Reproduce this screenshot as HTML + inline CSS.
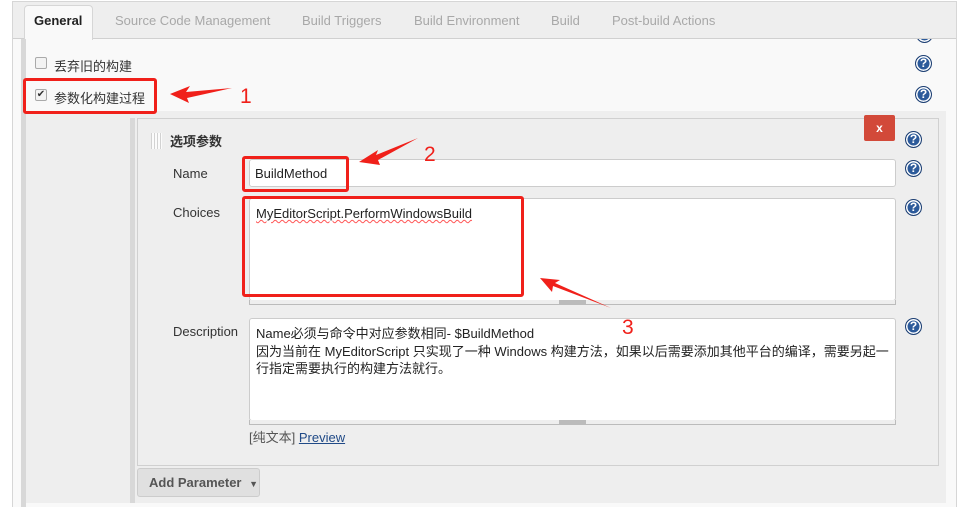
<!DOCTYPE html>
<html><head><meta charset="utf-8"><style>
*{margin:0;padding:0;box-sizing:border-box}
body{width:969px;height:507px;background:#fff;position:relative;overflow:hidden;font-family:"Liberation Sans","Noto Sans CJK SC",sans-serif;font-size:13px;color:#333}
.a{position:absolute}
.help{position:absolute;width:17px;height:17px;border-radius:50%;background:#2c5a9a;border:1px solid #1d3f73;box-shadow:inset 0 0 0 1.5px #fff;color:#fff;font:bold 12px "Liberation Sans",sans-serif;text-align:center;line-height:15px}
.lbl{position:absolute;font-size:13px;color:#333}
.inp{position:absolute;background:#fff;border:1px solid #ccc;border-radius:3px}
.bar{position:absolute;height:5px;background:#eee;border:1px solid #bbb;border-top:none}
.bar i{position:absolute;left:309px;top:0;width:27px;height:4px;background:#bbb}
.red{position:absolute;border:3px solid #f0201a;border-radius:3px}
.num{position:absolute;color:#f0201a;font-size:21px;font-family:"Liberation Sans",sans-serif}
</style></head><body>
<div class="a" style="left:12px;top:1px;width:945px;height:506px;border:1px solid #d6d6d6;border-bottom:none;background:#f9f9f9"></div>
<div class="a" style="left:13px;top:2px;width:943px;height:37px;background:#eee;border-bottom:1px solid #d0d0d0"></div>
<div class="a" style="left:24px;top:5px;width:69px;height:35px;background:#f9f9f9;border:1px solid #d6d6d6;border-bottom:none;border-radius:4px 4px 0 0"></div>
<div class="a" style="left:34px;top:13px;font-weight:bold;font-size:13px;color:#222">General</div>
<div class="a" style="left:115px;top:13px;color:#a8a8a8">Source Code Management</div>
<div class="a" style="left:302px;top:13px;color:#a8a8a8">Build Triggers</div>
<div class="a" style="left:414px;top:13px;color:#a8a8a8">Build Environment</div>
<div class="a" style="left:551px;top:13px;color:#a8a8a8">Build</div>
<div class="a" style="left:612px;top:13px;color:#a8a8a8">Post-build Actions</div>
<div class="a" style="left:21px;top:39px;width:5px;height:468px;background:#d8d8d8"></div>
<div class="help" style="left:916px;top:26px;clip-path:inset(13px 0 0 0)"></div>
<div class="a" style="left:35px;top:57px;width:12px;height:12px;border:1px solid #aaa;border-radius:2px;background:#f3f3f3"></div>
<div class="a" style="left:54px;top:56px">丢弃旧的构建</div>
<div class="help" style="left:915px;top:55px">?</div>
<div class="a" style="left:35px;top:89px;width:12px;height:12px;border:1px solid #aaa;border-radius:2px;background:#f3f3f3;font-size:10px;line-height:10px;text-align:center;color:#333">✔</div>
<div class="a" style="left:54px;top:88px">参数化构建过程</div>
<div class="help" style="left:915px;top:86px">?</div>
<div class="a" style="left:26px;top:111px;width:920px;height:392px;background:#eee"></div>
<div class="a" style="left:130px;top:118px;width:5px;height:385px;background:#d8d8d8"></div>
<div class="a" style="left:137px;top:118px;width:802px;height:348px;border:1px solid #d0d0d0;background:#eee"></div>
<div class="a" style="left:151px;top:133px;width:11px;height:16px;background:repeating-linear-gradient(90deg,#ccc 0 1px,transparent 1px 3px),#fff;opacity:.8"></div>
<div class="a" style="left:170px;top:131px;font-weight:bold">选项参数</div>
<div class="a" style="left:864px;top:115px;width:31px;height:26px;background:#d24939;border-radius:2px;color:#fff;font-weight:bold;text-align:center;line-height:26px;font-size:12px">x</div>
<div class="help" style="left:905px;top:131px">?</div>
<div class="lbl" style="left:173px;top:166px">Name</div>
<div class="inp" style="left:249px;top:159px;width:647px;height:28px"></div>
<div class="a" style="left:255px;top:166px;color:#222">BuildMethod</div>
<div class="help" style="left:905px;top:160px">?</div>
<div class="lbl" style="left:173px;top:205px">Choices</div>
<div class="inp" style="left:249px;top:198px;width:647px;height:103px"></div>
<div class="bar" style="left:249px;top:300px;width:647px"><i></i></div>
<div class="a" style="left:256px;top:206px;color:#222;text-decoration:underline wavy #f55;text-decoration-thickness:1px">MyEditorScript.PerformWindowsBuild</div>
<div class="help" style="left:905px;top:199px">?</div>
<div class="lbl" style="left:173px;top:324px">Description</div>
<div class="inp" style="left:249px;top:318px;width:647px;height:103px"></div>
<div class="bar" style="left:249px;top:420px;width:647px"><i></i></div>
<div class="a" style="left:256px;top:325px;color:#222;line-height:17.5px;width:640px">Name必须与命令中对应参数相同- $BuildMethod<br>因为当前在 MyEditorScript 只实现了一种 Windows 构建方法，如果以后需要添加其他平台的编译，需要另起一<br>行指定需要执行的构建方法就行。</div>
<div class="help" style="left:905px;top:318px">?</div>
<div class="a" style="left:249px;top:427px;color:#555">[纯文本] <span style="color:#204a87;text-decoration:underline">Preview</span></div>
<div class="a" style="left:137px;top:468px;width:123px;height:29px;background:#e0e0e0;border:1px solid #ccc;border-radius:3px;font-weight:bold;color:#555;line-height:27px;padding-left:11px">Add Parameter <span style="font-size:9px;margin-left:4px">▼</span></div>
<div class="red" style="left:23px;top:78px;width:134px;height:36px"></div>
<div class="red" style="left:242px;top:156px;width:107px;height:36px"></div>
<div class="red" style="left:242px;top:196px;width:282px;height:101px"></div>
<svg class="a" style="left:0;top:0" width="969" height="507">
<polygon points="170,94 190,86 186,92 232,88 187,98 189,103" fill="#f0201a"/>
<polygon points="359,162 378,150 376,155 418,138 378,160 380,165" fill="#f0201a"/>
<polygon points="540,278 560,280 555,283 611,308 553,286 552,292" fill="#f0201a"/>
</svg>
<div class="num" style="left:240px;top:85px">1</div>
<div class="num" style="left:424px;top:143px">2</div>
<div class="num" style="left:622px;top:316px">3</div>
</body></html>
